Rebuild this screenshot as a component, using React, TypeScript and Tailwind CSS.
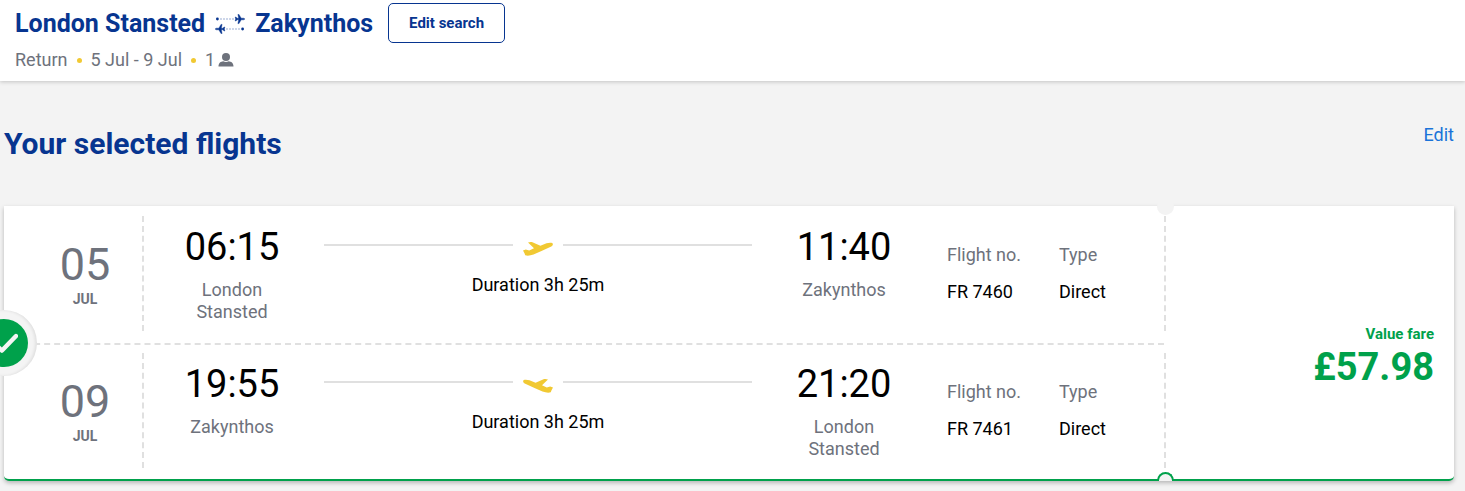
import clsx from 'clsx';

interface Flight {
  day: string;
  month: string;
  departs: string;
  from: string;
  arrives: string;
  to: string;
  duration: string;
  flightNo: string;
  type: string;
  inbound?: boolean;
}

const FLIGHTS: Flight[] = [
  {
    day: '05',
    month: 'JUL',
    departs: '06:15',
    from: 'London Stansted',
    arrives: '11:40',
    to: 'Zakynthos',
    duration: '3h 25m',
    flightNo: 'FR 7460',
    type: 'Direct',
  },
  {
    day: '09',
    month: 'JUL',
    departs: '19:55',
    from: 'Zakynthos',
    arrives: '21:20',
    to: 'London Stansted',
    duration: '3h 25m',
    flightNo: 'FR 7461',
    type: 'Direct',
    inbound: true,
  },
];

function ReturnPlanes(): JSX.Element {
  const plane =
    'M30 5 L28.6 4.2 H26.2 L24 .4 H22.9 L23.7 4.2 H22 L21 3 H20.2 L20.6 5 L20.2 7 H21 L22 5.8 H23.7 L22.9 9.6 H24 L26.2 5.8 H28.6 Z';
  return (
    <svg viewBox="0 0 30 20" className="h-5 w-[30px] text-[#073590]" fill="currentColor" aria-hidden>
      <circle cx="2.4" cy="5" r="1.4" />
      <path d="M5 5H20" stroke="currentColor" strokeOpacity=".4" strokeDasharray="2 1" />
      <path d={plane} stroke="currentColor" strokeWidth=".4" />
      <g transform="rotate(180 15 10)">
        <circle cx="2.4" cy="5" r="1.4" />
        <path d="M5 5H20" stroke="currentColor" strokeOpacity=".4" strokeDasharray="2 1" />
        <path d={plane} stroke="currentColor" strokeWidth=".4" />
      </g>
    </svg>
  );
}

function FlightPlane({ inbound }: { inbound?: boolean }): JSX.Element {
  return (
    <svg
      viewBox="0 0 30 14"
      className={clsx('mx-2.5 h-3.5 w-[30px] shrink-0 text-[#f1c933]', inbound && '-scale-x-100')}
      fill="currentColor"
      aria-hidden
    >
      <path d="M5 .6C6.6-.1 8.4-.1 10 .4L17.4 3.7 23.5 1.3C25.6.6 28.3.4 29.5 1.2 30.3 2 29.8 3.6 28.3 4.4L18.5 9 10.5 12.6C8 13.6 5 14 3 13.6 1.9 13.2 1.9 12.4 1.6 11.6L0 8.6 2.8 7.5 6.2 8.4 11 6.2Z" />
    </svg>
  );
}

function Airport({ time, name }: { time: string; name: string }): JSX.Element {
  return (
    <div className="w-44 shrink-0 pt-5 text-center">
      <div className="text-[38px] leading-[42px] text-black">{time}</div>
      <div className="mx-auto mt-[11px] w-24 text-lg leading-[22px]">{name}</div>
    </div>
  );
}

function FlightRow({ flight }: { flight: Flight }): JSX.Element {
  return (
    <div className="flex h-[136px]">
      <div className="w-[138px] shrink-0 pt-9 pl-6 text-center">
        <div className="text-[45px] leading-[46px]">{flight.day}</div>
        <div className="text-sm leading-[22px] font-bold">{flight.month}</div>
      </div>
      <div className="mt-2.5 mb-[11px] border-l-2 border-dashed border-[#e0e0e0]" />
      <Airport time={flight.departs} name={flight.from} />
      <div className="min-w-0 flex-1 px-1 pt-9 text-center">
        <div className="flex">
          <div className="mt-0.5 h-0.5 flex-1 bg-[#e0e0e0]" />
          <FlightPlane inbound={flight.inbound} />
          <div className="mt-0.5 h-0.5 flex-1 bg-[#e0e0e0]" />
        </div>
        <div className="mt-[18px] text-lg leading-[22px] text-black">Duration {flight.duration}</div>
      </div>
      <Airport time={flight.arrives} name={flight.to} />
      <dl className="flex w-[232px] shrink-0 pt-[38px] pl-[15px] text-lg leading-[22px]">
        <div className="w-28">
          <dt>Flight no.</dt>
          <dd className="mt-[15px] text-black">{flight.flightNo}</dd>
        </div>
        <div>
          <dt>Type</dt>
          <dd className="mt-[15px] text-black">{flight.type}</dd>
        </div>
      </dl>
      <div className="mt-2.5 mb-[11px] border-l-2 border-dashed border-[#e0e0e0]" />
    </div>
  );
}

function SelectedBadge(): JSX.Element {
  return (
    <div className="absolute top-1/2 -left-[33px] flex size-[66px] -translate-y-1/2 items-center justify-center rounded-full bg-[#f4f4f4] shadow-[inset_-2px_0_3px_rgba(0,0,0,0.08)]">
      <div className="flex size-12 items-center justify-center rounded-full bg-[#00a14b]">
        <svg
          viewBox="0 0 28 20"
          className="h-5 w-7"
          fill="none"
          stroke="#f4f4f4"
          strokeWidth="4.4"
          strokeLinecap="round"
          strokeLinejoin="round"
          aria-label="Selected"
        >
          <path d="M4 10L12 17.6L26 3" />
        </svg>
      </div>
    </div>
  );
}

export default function App(): JSX.Element {
  return (
    <div className="min-h-screen overflow-hidden bg-[#f3f3f3] font-['Roboto',sans-serif] text-[#6e727c]">
      <header className="bg-white px-[15px] pt-[3px] pb-2.5 shadow-[0_1px_4px_rgba(0,0,0,0.2)]">
        <div className="flex items-center text-[#073590]">
          <h1 className="flex items-center gap-2.5 pt-0.5 text-[25px] leading-8 font-bold">
            London Stansted
            <ReturnPlanes />
            Zakynthos
          </h1>
          <button type="button" className="ml-[15px] h-10 rounded-[5px] border border-[#073590] px-5 text-[15px] font-bold">
            Edit search
          </button>
        </div>
        <div className="mt-1.5 flex items-center text-lg leading-[22px]">
          Return
          <span className="mx-[9px] size-[5px] rounded-full bg-[#f1c933]" />
          5 Jul - 9 Jul
          <span className="mx-[9px] size-[5px] rounded-full bg-[#f1c933]" />
          1
          <svg viewBox="0 0 16 14" className="ml-[3px] h-3.5 w-4" fill="currentColor" aria-label="passenger">
            <circle cx="8" cy="4" r="4" />
            <path d="M.5 13.5C.5 9.8 3 8.4 5.2 8.2 7 9.2 9 9.2 10.8 8.2 13 8.4 15.5 9.8 15.5 13.5Z" />
          </svg>
        </div>
      </header>

      <main className="pr-[11px] pb-2.5 pl-1">
        <div className="flex items-start justify-between pt-[43px] pb-[43px]">
          <h2 className="pt-px text-[30px] leading-[38px] font-bold text-[#073590]">Your selected flights</h2>
          <a href="#edit" className="text-lg leading-[22px] text-[#1a73d9]">
            Edit
          </a>
        </div>

        <section className="relative flex rounded-b-[5px] border-b-2 border-[#00a14b] bg-white shadow-[0_2px_4px_rgba(0,0,0,0.25)]">
          <div className="relative flex flex-1 flex-col gap-px">
            <FlightRow flight={FLIGHTS[0]} />
            <div className="absolute top-1/2 right-0.5 left-0 border-t-2 border-dashed border-[#e0e0e0]" />
            <FlightRow flight={FLIGHTS[1]} />
          </div>
          {/* ticket notches on the perforation */}
          <div className="absolute -top-2 right-[280px] size-[17px] rounded-full bg-[#f3f3f3]" />
          <div className="absolute right-[280px] -bottom-0.5 h-[9px] w-[17px] rounded-t-full border-2 border-b-0 border-[#00a14b] bg-[#f3f3f3]" />
          <div className="flex w-72 shrink-0 flex-col justify-center pt-7 pr-5 text-right text-[#00a14b]">
            <div className="text-[15px] leading-5 font-bold">Value fare</div>
            <div className="text-[38px] leading-[46px] font-bold">£57.98</div>
          </div>
          <SelectedBadge />
        </section>
      </main>
    </div>
  );
}
